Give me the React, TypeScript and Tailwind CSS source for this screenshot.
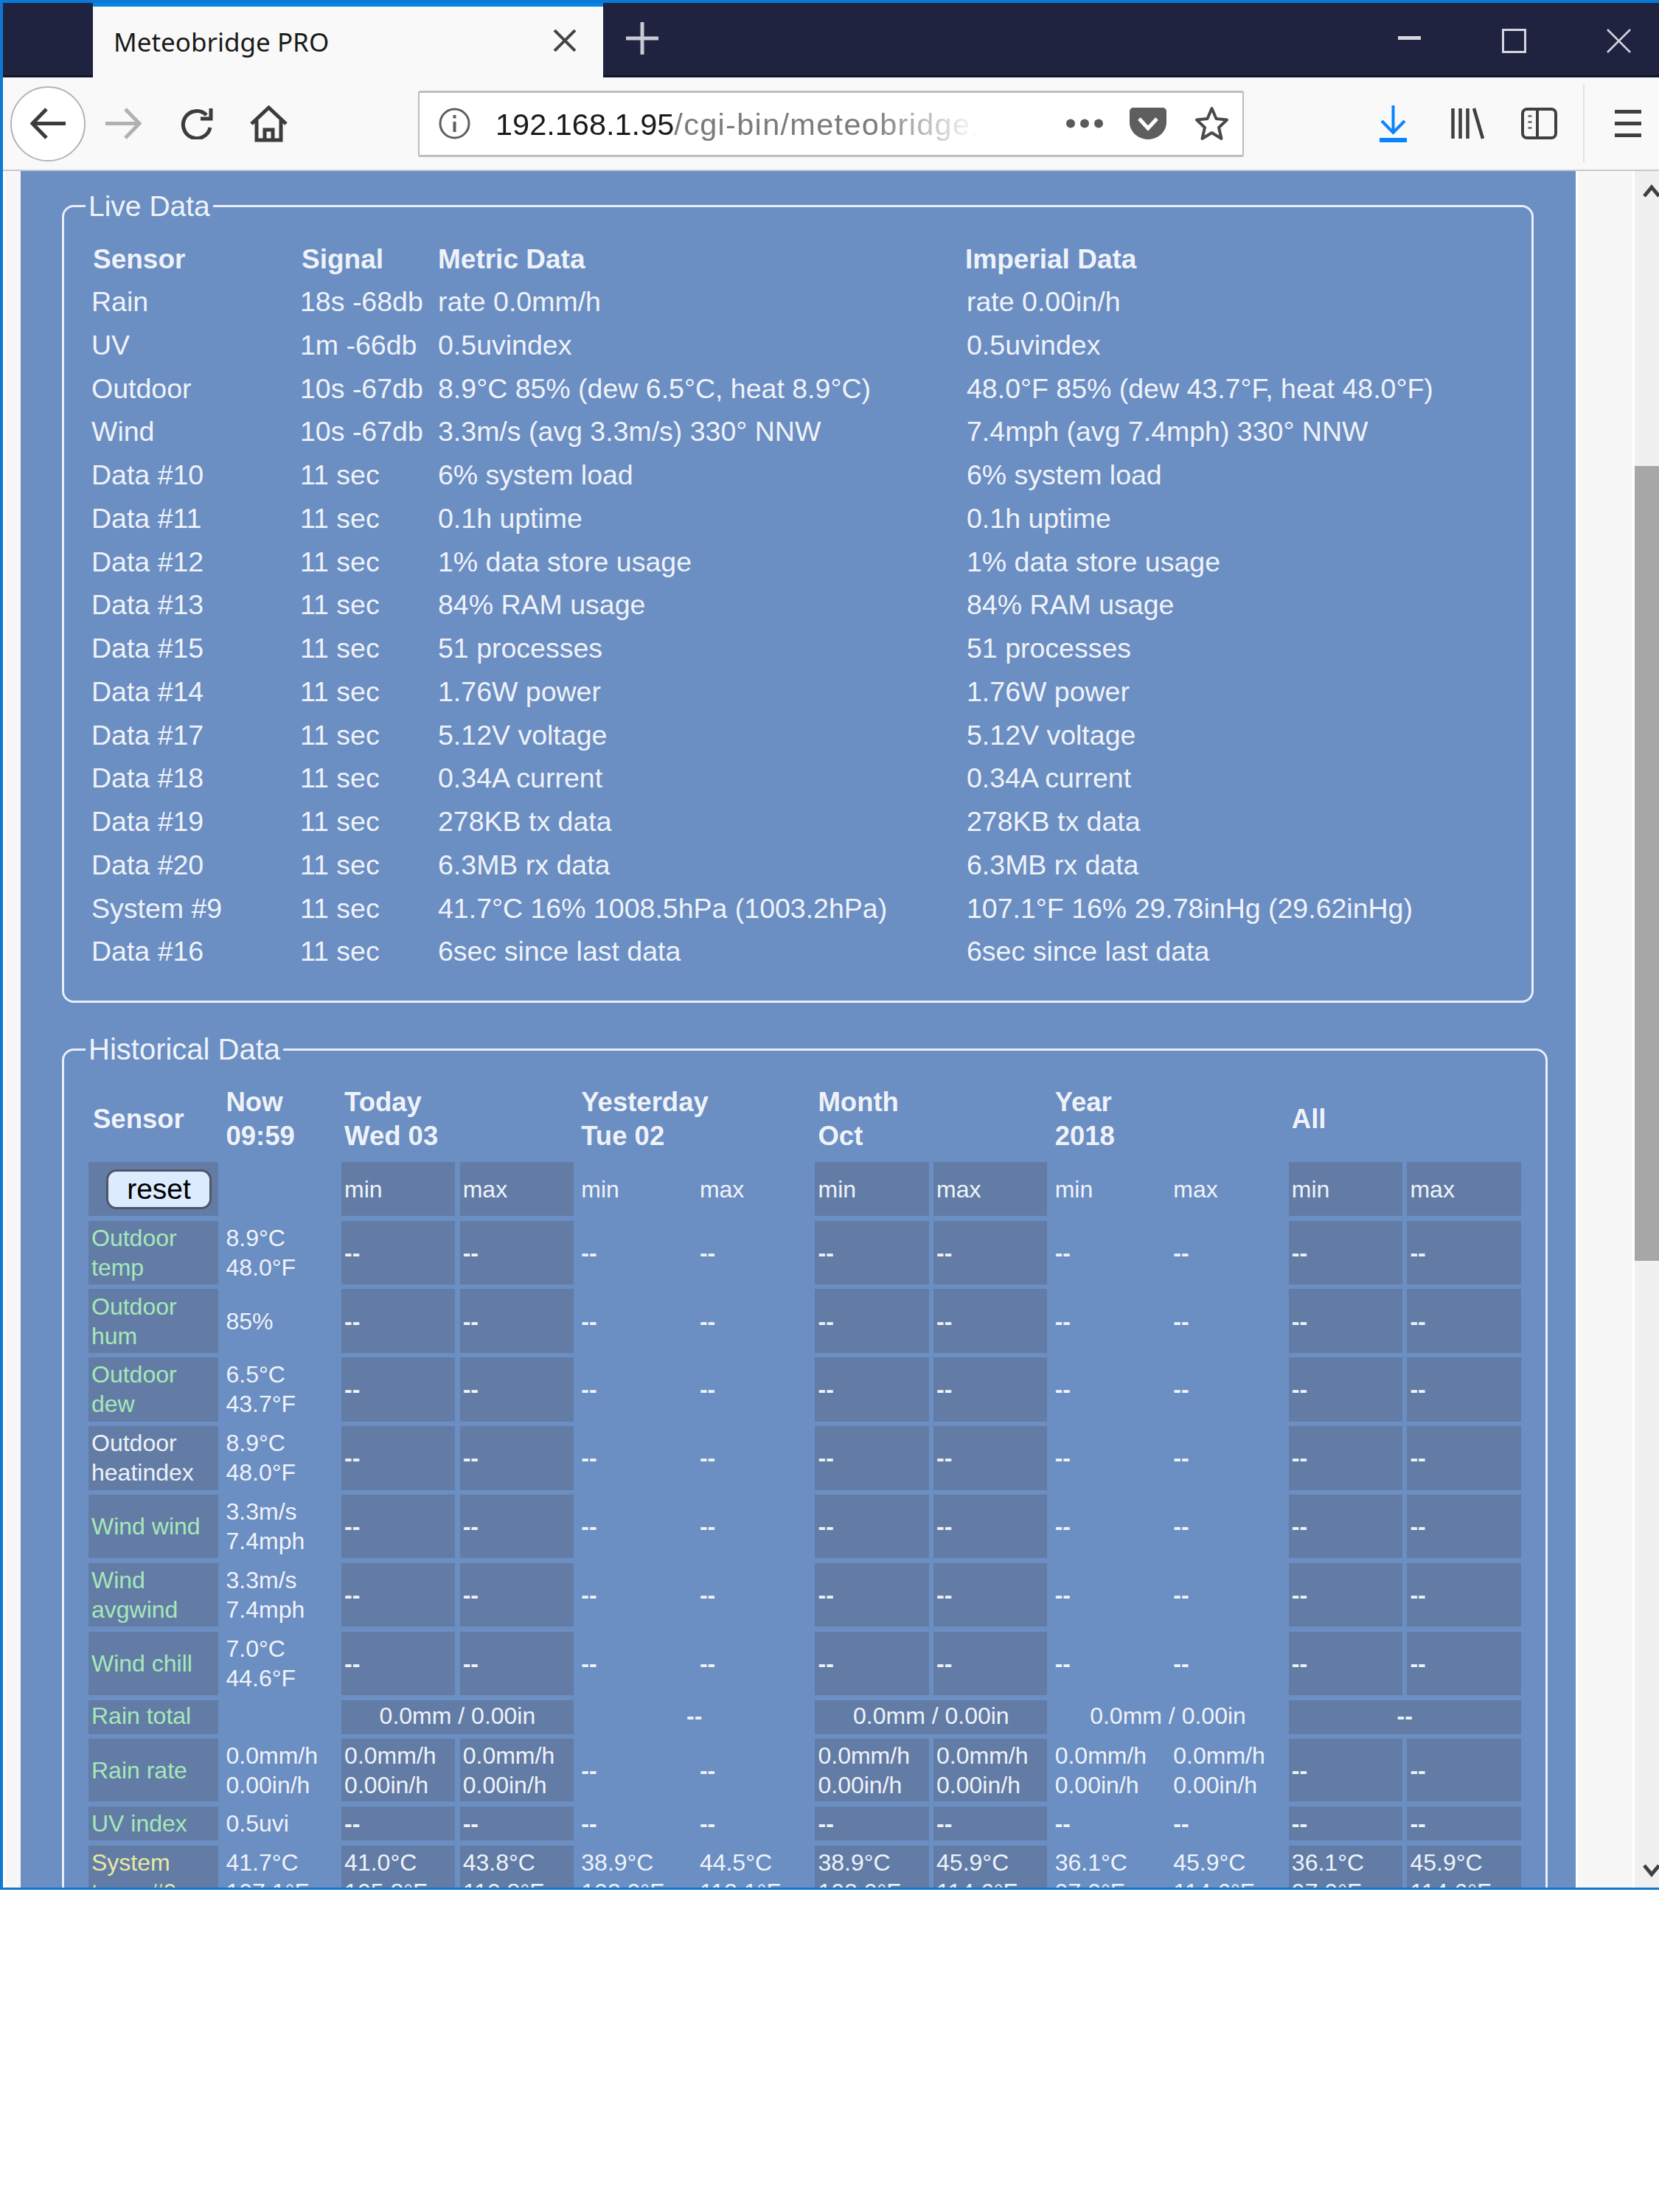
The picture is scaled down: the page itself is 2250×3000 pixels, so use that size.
const liveRows = [
  ['Rain', '18s -68db', 'rate 0.0mm/h', 'rate 0.00in/h'],
  ['UV', '1m -66db', '0.5uvindex', '0.5uvindex'],
  ['Outdoor', '10s -67db', '8.9°C 85% (dew 6.5°C, heat 8.9°C)', '48.0°F 85% (dew 43.7°F, heat 48.0°F)'],
  ['Wind', '10s -67db', '3.3m/s (avg 3.3m/s) 330° NNW', '7.4mph (avg 7.4mph) 330° NNW'],
  ['Data #10', '11 sec', '6% system load', '6% system load'],
  ['Data #11', '11 sec', '0.1h uptime', '0.1h uptime'],
  ['Data #12', '11 sec', '1% data store usage', '1% data store usage'],
  ['Data #13', '11 sec', '84% RAM usage', '84% RAM usage'],
  ['Data #15', '11 sec', '51 processes', '51 processes'],
  ['Data #14', '11 sec', '1.76W power', '1.76W power'],
  ['Data #17', '11 sec', '5.12V voltage', '5.12V voltage'],
  ['Data #18', '11 sec', '0.34A current', '0.34A current'],
  ['Data #19', '11 sec', '278KB tx data', '278KB tx data'],
  ['Data #20', '11 sec', '6.3MB rx data', '6.3MB rx data'],
  ['System #9', '11 sec', '41.7°C 16% 1008.5hPa (1003.2hPa)', '107.1°F 16% 29.78inHg (29.62inHg)'],
  ['Data #16', '11 sec', '6sec since last data', '6sec since last data'],
];

const dashes = Array(10).fill('--') as string[];
const rate = '0.0mm/h|0.00in/h';

const histRows = [
  { label: 'Outdoor|temp', tone: 'green', now: '8.9°C|48.0°F', vals: dashes },
  { label: 'Outdoor|hum', tone: 'green', now: '85%', vals: dashes },
  { label: 'Outdoor|dew', tone: 'green', now: '6.5°C|43.7°F', vals: dashes },
  { label: 'Outdoor|heatindex', tone: 'white', now: '8.9°C|48.0°F', vals: dashes },
  { label: 'Wind wind', tone: 'green', now: '3.3m/s|7.4mph', vals: dashes },
  { label: 'Wind|avgwind', tone: 'green', now: '3.3m/s|7.4mph', vals: dashes },
  { label: 'Wind chill', tone: 'green', now: '7.0°C|44.6°F', vals: dashes },
];

const lastRows = [
  {
    label: 'Rain rate',
    tone: 'green',
    now: rate,
    vals: [rate, rate, '--', '--', rate, rate, rate, rate, '--', '--'],
  },
  { label: 'UV index', tone: 'green', now: '0.5uvi', vals: dashes },
  {
    label: 'System|temp #9',
    tone: 'yellow',
    now: '41.7°C|107.1°F',
    vals: [
      '41.0°C|105.8°F',
      '43.8°C|110.8°F',
      '38.9°C|102.0°F',
      '44.5°C|112.1°F',
      '38.9°C|102.0°F',
      '45.9°C|114.6°F',
      '36.1°C|97.0°F',
      '45.9°C|114.6°F',
      '36.1°C|97.0°F',
      '45.9°C|114.6°F',
    ],
  },
];

const isShaded = (i: number) => [0, 1, 4, 5, 8, 9].includes(i);

function Lines({ text }: { text: string }) {
  return (
    <div className={`leading-[40px] ${text === '--' ? 'font-bold' : ''}`}>
      {text.split('|').map((line) => (
        <div key={line}>{line}</div>
      ))}
    </div>
  );
}

function Cell({ text, shaded, className = '' }: { text: string; shaded?: boolean; className?: string }) {
  return (
    <div className={`flex items-center px-[4px] ${shaded ? 'bg-[#627ca6]' : ''} ${className}`}>
      <Lines text={text} />
    </div>
  );
}

function LabelCell({ text, tone, className = '' }: { text: string; tone: string; className?: string }) {
  const color = tone === 'green' ? 'text-[#a6e8b8]' : tone === 'yellow' ? 'text-[#e9e89f]' : 'text-[#eef2f8]';
  return (
    <div className={`flex items-center bg-[#627ca6] px-[4px] ${color} ${className}`}>
      <Lines text={text} />
    </div>
  );
}

function HistRow({ row }: { row: { label: string; tone: string; now: string; vals: string[] } }) {
  return (
    <>
      <LabelCell text={row.label} tone={row.tone} />
      <Cell text={row.now} />
      {row.vals.map((val, i) => (
        <Cell key={i} text={val} shaded={isShaded(i)} />
      ))}
    </>
  );
}

function HeadCell({ text, span, className = '' }: { text: string; span?: boolean; className?: string }) {
  return (
    <div className={`flex items-center px-[4px] pb-[2px] text-[36.5px] font-bold leading-[46px] ${span ? 'col-span-2' : ''} ${className}`}>
      <div>
        {text.split('|').map((line) => (
          <div key={line}>{line}</div>
        ))}
      </div>
    </div>
  );
}

function Titlebar() {
  return (
    <div className="flex h-[105px] shrink-0 items-stretch border-t-4 border-b-[3px] border-t-[#0a78d7] border-b-[#12142c] bg-[#1f2340]">
      <div className="w-[122px]" />
      <div className="-mb-[3px] flex w-[692px] items-center border-t-[5px] border-[#0a84e0] bg-[#f9f9f9]">
        <span className="ml-[28px] font-['Noto_Sans',sans-serif] text-[35px] text-[#1a1a1a]">Meteobridge PRO</span>
        <svg className="ml-auto mr-[36px] -mt-[4px]" width="32" height="30" viewBox="0 0 32 30">
          <path d="M2 1 L30 29 M30 1 L2 29" stroke="#444" strokeWidth="4" fill="none" />
        </svg>
      </div>
      <div className="flex flex-1 items-center pb-[2px]">
        <svg className="ml-[31px]" width="44" height="44" viewBox="0 0 44 44">
          <path d="M22 0 V44 M0 22 H44" stroke="#c9cad4" strokeWidth="5" fill="none" />
        </svg>
        <svg className="ml-[1003px]" width="31" height="6" viewBox="0 0 31 6">
          <rect width="31" height="5" fill="#d4d5de" />
        </svg>
        <svg className="ml-[110px] mt-[6px]" width="33" height="33" viewBox="0 0 33 33">
          <rect x="1.5" y="1.5" width="30" height="30" stroke="#d4d5de" strokeWidth="3" fill="none" />
        </svg>
        <svg className="ml-[109px] mt-[6px]" width="33" height="33" viewBox="0 0 33 33">
          <path d="M1 1 L32 32 M32 1 L1 32" stroke="#d4d5de" strokeWidth="2.5" fill="none" />
        </svg>
      </div>
    </div>
  );
}

function Toolbar() {
  return (
    <div className="flex h-[127px] shrink-0 items-center border-b-[2px] border-[#c5cad3] bg-[#f9f9f9]">
      <div className="ml-[10px] flex size-[102px] items-center justify-center rounded-full border-[2px] border-[#b4b4b4] bg-white">
        <svg width="48" height="43" viewBox="0 0 48 43">
          <path d="M22 2 L3 21.5 L22 41 M3 21.5 H48" stroke="#3c3c3c" strokeWidth="5" fill="none" />
        </svg>
      </div>
      <svg className="ml-[27px]" width="49" height="43" viewBox="0 0 49 43">
        <path d="M27 2 L46 21.5 L27 41 M46 21.5 H0" stroke="#b1b1b1" strokeWidth="5" fill="none" />
      </svg>
      <svg className="ml-[52px]" width="46" height="43" viewBox="0 0 46 43">
        <path d="M36 10 A18.5 18.5 0 1 0 41 27" stroke="#3c3c3c" strokeWidth="5" fill="none" />
        <path d="M42 1 V15 H28" stroke="#3c3c3c" strokeWidth="5" fill="none" />
      </svg>
      <svg className="ml-[49px]" width="51" height="50" viewBox="0 0 51 50">
        <path d="M2 25 L25.5 3 L49 25 M9 20 V47 H42 V20 M20 47 V33 H31 V47" stroke="#3c3c3c" strokeWidth="5" fill="none" />
      </svg>

      <div className="ml-[177px] flex h-[90px] w-[1120px] items-center rounded-[3px] border-x-[2px] border-y-[3px] border-[#bdbdbd] bg-white">
        <svg className="ml-[26px] shrink-0" width="43" height="43" viewBox="0 0 43 43">
          <circle cx="21.5" cy="21.5" r="19.5" stroke="#5e5e5e" strokeWidth="3" fill="none" />
          <rect x="19.5" y="19" width="4" height="14" fill="#5e5e5e" />
          <rect x="19.5" y="10" width="4" height="4.5" fill="#5e5e5e" />
        </svg>
        <div className="ml-[34px] mt-[4px] w-[657px] shrink-0 overflow-hidden whitespace-nowrap text-[41.5px] text-[#1a1a1a] [mask-image:linear-gradient(to_right,black_78%,transparent)]">
          192.168.1.95<span className="tracking-[1.3px] text-[#7c7c7c]">/cgi-bin/meteobridge.</span>
        </div>
        <svg className="ml-[117px] shrink-0" width="50" height="13" viewBox="0 0 50 13">
          <circle cx="6" cy="6.5" r="6" fill="#5a5a5a" />
          <circle cx="25" cy="6.5" r="6" fill="#5a5a5a" />
          <circle cx="44" cy="6.5" r="6" fill="#5a5a5a" />
        </svg>
        <svg className="ml-[36px] shrink-0" width="50" height="43" viewBox="0 0 50 43">
          <path d="M5 0 H45 a5 5 0 0 1 5 5 V20 C50 33 38 43 25 43 C12 43 0 33 0 20 V5 a5 5 0 0 1 5 -5 z" fill="#5e5e5e" />
          <path d="M13 15 L25 28 L37 15" stroke="#fff" strokeWidth="5" fill="none" />
        </svg>
        <svg className="ml-[38px] shrink-0" width="47" height="49" viewBox="0 0 47 49">
          <path d="M23.5 4 L29.5 18 L44 19.5 L33 30 L36.5 45 L23.5 37 L10.5 45 L14 30 L3 19.5 L17.5 18 Z" stroke="#4a4a4a" strokeWidth="4" strokeLinejoin="round" fill="none" />
        </svg>
      </div>

      <svg className="ml-[184px]" width="37" height="50" viewBox="0 0 37 50">
        <path d="M18.5 0 V36 M3 21 L18.5 37 L34 21" stroke="#0a84ff" strokeWidth="4" fill="none" />
        <rect y="44" width="37" height="6" fill="#0a84ff" />
      </svg>
      <svg className="ml-[60px]" width="46" height="43" viewBox="0 0 46 43">
        <path d="M2.5 1 V42 M12.5 1 V42 M22.5 1 V42 M31 1 L43 42" stroke="#404040" strokeWidth="4.5" fill="none" />
      </svg>
      <svg className="ml-[49px]" width="49" height="43" viewBox="0 0 49 43">
        <rect x="2" y="2" width="45" height="39" rx="6" stroke="#404040" strokeWidth="4" fill="none" />
        <path d="M22 2 V41" stroke="#404040" strokeWidth="4" fill="none" />
        <path d="M12 10 V13 M12 18 V21 M12 26 V29" stroke="#7a7a7a" strokeWidth="5" fill="none" />
      </svg>
      <div className="ml-[35px] h-[105px] w-[2px] bg-[#e2e2e2]" />
      <div className="ml-[41px] flex w-[36px] flex-col gap-[11px]">
        <div className="h-[5px] bg-[#404040]" />
        <div className="h-[5px] bg-[#404040]" />
        <div className="h-[5px] bg-[#404040]" />
      </div>
    </div>
  );
}

function LiveData() {
  return (
    <fieldset className="ml-[56px] w-[1996px] rounded-[16px] border-[3px] border-[#e8eff9]">
      <legend className="ml-[29px] px-[4px] text-[39px] leading-[45px]">Live Data</legend>
      <div className="pb-[37px] pl-[37px] pt-[21px] text-[37.5px]">
        <div className="grid h-[57px] grid-cols-[283px_187px_717px_1fr] text-[37px] font-bold leading-[58.75px]">
          <div className="pl-[2px]">Sensor</div>
          <div className="pl-[2px]">Signal</div>
          <div>Metric Data</div>
          <div className="-ml-[2px]">Imperial Data</div>
        </div>
        {liveRows.map((row) => (
          <div key={row[0]} className="grid grid-cols-[283px_187px_717px_1fr] whitespace-nowrap leading-[58.75px]">
            {row.map((text, i) => (
              <div key={i}>{text}</div>
            ))}
          </div>
        ))}
      </div>
    </fieldset>
  );
}

function HistoricalData() {
  return (
    <fieldset className="ml-[56px] mt-[41px] w-[2015px] rounded-[16px] border-[3px] border-[#e8eff9]">
      <legend className="ml-[29px] px-[4px] text-[40px] leading-[45px]">Historical Data</legend>
      <div className="pl-[33px] pt-[22px] text-[32px]">
        <div className="grid grid-cols-[176px_repeat(11,154.1px)] grid-rows-[101.5px_73px_repeat(7,86.4px)_46px_85px_46.5px_86px] gap-[6.5px] whitespace-nowrap">
          <HeadCell text="Sensor" className="pl-[6px]" />
          <HeadCell text="Now|09:59" />
          <HeadCell text="Today|Wed 03" span />
          <HeadCell text="Yesterday|Tue 02" span />
          <HeadCell text="Month|Oct" span />
          <HeadCell text="Year|2018" span />
          <HeadCell text="All" span />

          <div className="flex items-center bg-[#627ca6] pl-[24px]">
            <button className="h-[54px] w-[143px] rounded-[14px] border-[3px] border-[#4f5668] bg-[#dcebfd] text-[39px] leading-none text-black">
              reset
            </button>
          </div>
          <div />
          {dashes.map((_, i) => (
            <Cell key={i} text={i % 2 === 0 ? 'min' : 'max'} shaded={isShaded(i)} />
          ))}

          {histRows.map((row) => (
            <HistRow key={row.label} row={row} />
          ))}

          <LabelCell text="Rain total" tone="green" className="pb-[3px]" />
          <div />
          <Cell text="0.0mm / 0.00in" shaded className="col-span-2 justify-center pb-[3px]" />
          <Cell text="--" className="col-span-2 justify-center pb-[3px]" />
          <Cell text="0.0mm / 0.00in" shaded className="col-span-2 justify-center pb-[3px]" />
          <Cell text="0.0mm / 0.00in" className="col-span-2 justify-center pb-[3px]" />
          <Cell text="--" shaded className="col-span-2 justify-center pb-[3px]" />

          {lastRows.map((row) => (
            <HistRow key={row.label} row={row} />
          ))}
        </div>
      </div>
    </fieldset>
  );
}

export default function App() {
  return (
    <div className="h-[3000px] w-[2250px] bg-white font-['Liberation_Sans',Arial,sans-serif]">
      <div className="flex h-[2563px] flex-col overflow-hidden border-b-[3px] border-l-4 border-[#0f78cf]">
        <Titlebar />
        <Toolbar />
        <div className="flex min-h-0 flex-1">
          <div className="w-[24px] border-l-[3px] border-white bg-[#f7f7f7]" />
          <main className="w-[2109px] overflow-hidden bg-[#6b8ec3] pt-[25px] text-[#eff3f9]">
            <LiveData />
            <HistoricalData />
          </main>
          <div className="w-[80px] border-x-[3px] border-white bg-[#f7f7f7]" />
          <div className="flex w-[33px] flex-col overflow-hidden bg-[#f0f0f0]">
            <svg className="ml-[11px] mt-[18px] shrink-0" width="24" height="18" viewBox="0 0 24 18">
              <path d="M2 16 L12 4 L22 16" stroke="#404040" strokeWidth="5" fill="none" />
            </svg>
            <div className="mt-[364px] h-[1078px] shrink-0 bg-[#a7a7a7]" />
            <svg className="ml-[11px] mt-auto mb-[14px] shrink-0" width="24" height="18" viewBox="0 0 24 18">
              <path d="M2 2 L12 14 L22 2" stroke="#404040" strokeWidth="5" fill="none" />
            </svg>
          </div>
        </div>
      </div>
    </div>
  );
}
